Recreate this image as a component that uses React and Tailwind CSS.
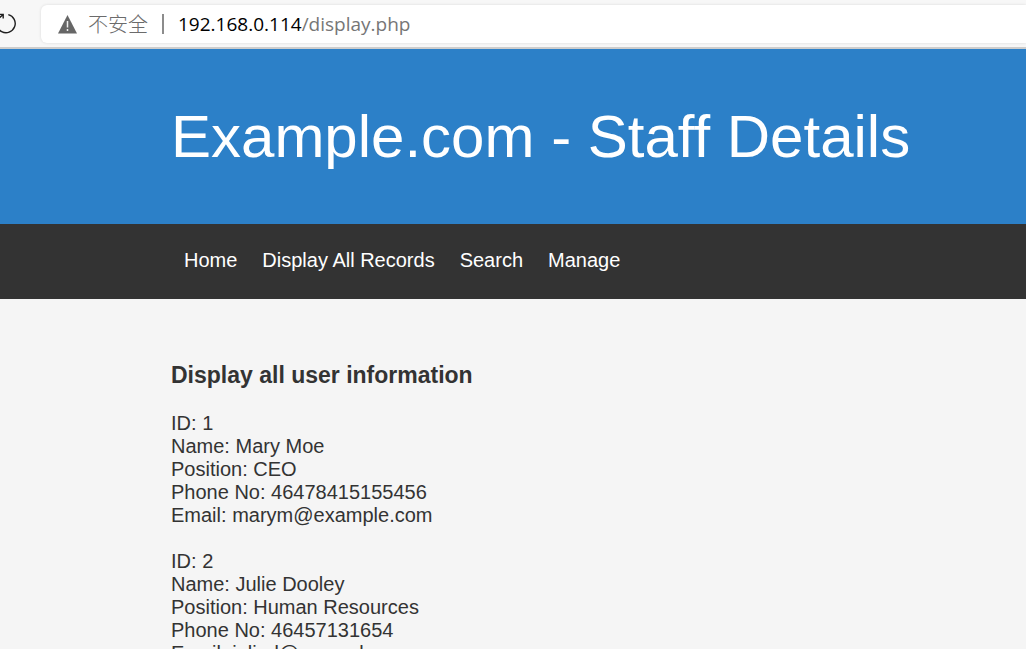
const links = [
  { label: "Home", href: "#home" },
  { label: "Display All Records", href: "#display" },
  { label: "Search", href: "#search" },
  { label: "Manage", href: "#manage" },
];

const staff = [
  { id: 1, name: "Mary Moe", position: "CEO", phone: "46478415155456", email: "marym@example.com" },
  { id: 2, name: "Julie Dooley", position: "Human Resources", phone: "46457131654", email: "julied@example.com" },
];

function BrowserBar() {
  return (
    <div className="flex h-[49px] shrink-0 items-start border-b-2 border-[#cccccc] bg-[#f7f7f7] pt-[5px]">
      <button type="button" aria-label="Reload" className="flex h-[38px] w-[41px] shrink-0 items-center">
        <svg width="18" height="24" viewBox="0 0 18 24" fill="none" stroke="#1f1f1f" strokeWidth="1.4">
          <path d="M8.3 2.6A9.2 9.2 0 1 1 -1.5 6.2" />
          <path d="M-3 2.4H3.2V6.6M3.2 2.4L-2 7" />
        </svg>
      </button>
      <div className="flex h-[38px] flex-1 items-center rounded-l-md bg-white pl-[17px] font-['Open_Sans','Noto_Sans_CJK_SC',sans-serif] text-[19px] shadow-[0_0_3px_rgba(0,0,0,0.12)]">
        <button type="button" className="flex items-center gap-[11px] text-[#6b6b6b]">
          <svg width="19" height="19" viewBox="0 0 19 19" aria-hidden="true">
            <path d="M9.5 0L19 18.5H0Z" fill="#666" />
            <path d="M9.5 6V12.5M9.5 14V16" stroke="#eee" strokeWidth="1.5" />
          </svg>
          <span className="font-['Noto_Sans_CJK_SC',sans-serif] text-xl leading-6 font-light">不安全</span>
        </button>
        <span className="ml-[14px] h-5 w-[2px] bg-[#8c8c8c]" />
        <div
          role="textbox"
          aria-label="Address"
          contentEditable
          suppressContentEditableWarning
          className="ml-[14px] flex-1 whitespace-nowrap leading-6 text-[#767676] outline-none"
        >
          <span className="text-black">192.168.0.114</span>/display.php
        </div>
      </div>
    </div>
  );
}

function StaffRecord({ person }) {
  return (
    <p>
      ID: {person.id}
      <br />
      Name: {person.name}
      <br />
      Position: {person.position}
      <br />
      Phone No: {person.phone}
      <br />
      Email: {person.email}
    </p>
  );
}

export default function App() {
  return (
    <div className="flex h-screen flex-col overflow-hidden bg-[#f5f5f5] font-['Liberation_Sans',Arial,sans-serif] text-[20px] leading-[23px] text-[#333333]">
      <BrowserBar />
      <header className="flex h-[175px] shrink-0 items-center bg-[#2c80c8] pl-[171px]">
        <h1 className="whitespace-nowrap text-[60px] leading-[68px] text-white">Example.com - Staff Details</h1>
      </header>
      <nav className="flex h-[75px] shrink-0 items-center gap-[25px] bg-[#333333] pb-[3px] pl-[184px] text-white">
        {links.map((link) => (
          <a key={link.label} href={link.href}>
            {link.label}
          </a>
        ))}
      </nav>
      <main className="min-h-0 flex-1 overflow-hidden pt-[63px] pl-[171px]">
        <h2 className="text-[23px] leading-[26px] font-bold">Display all user information</h2>
        <div className="mt-6 flex flex-col gap-[23px]">
          {staff.map((person) => (
            <StaffRecord key={person.id} person={person} />
          ))}
        </div>
      </main>
    </div>
  );
}
